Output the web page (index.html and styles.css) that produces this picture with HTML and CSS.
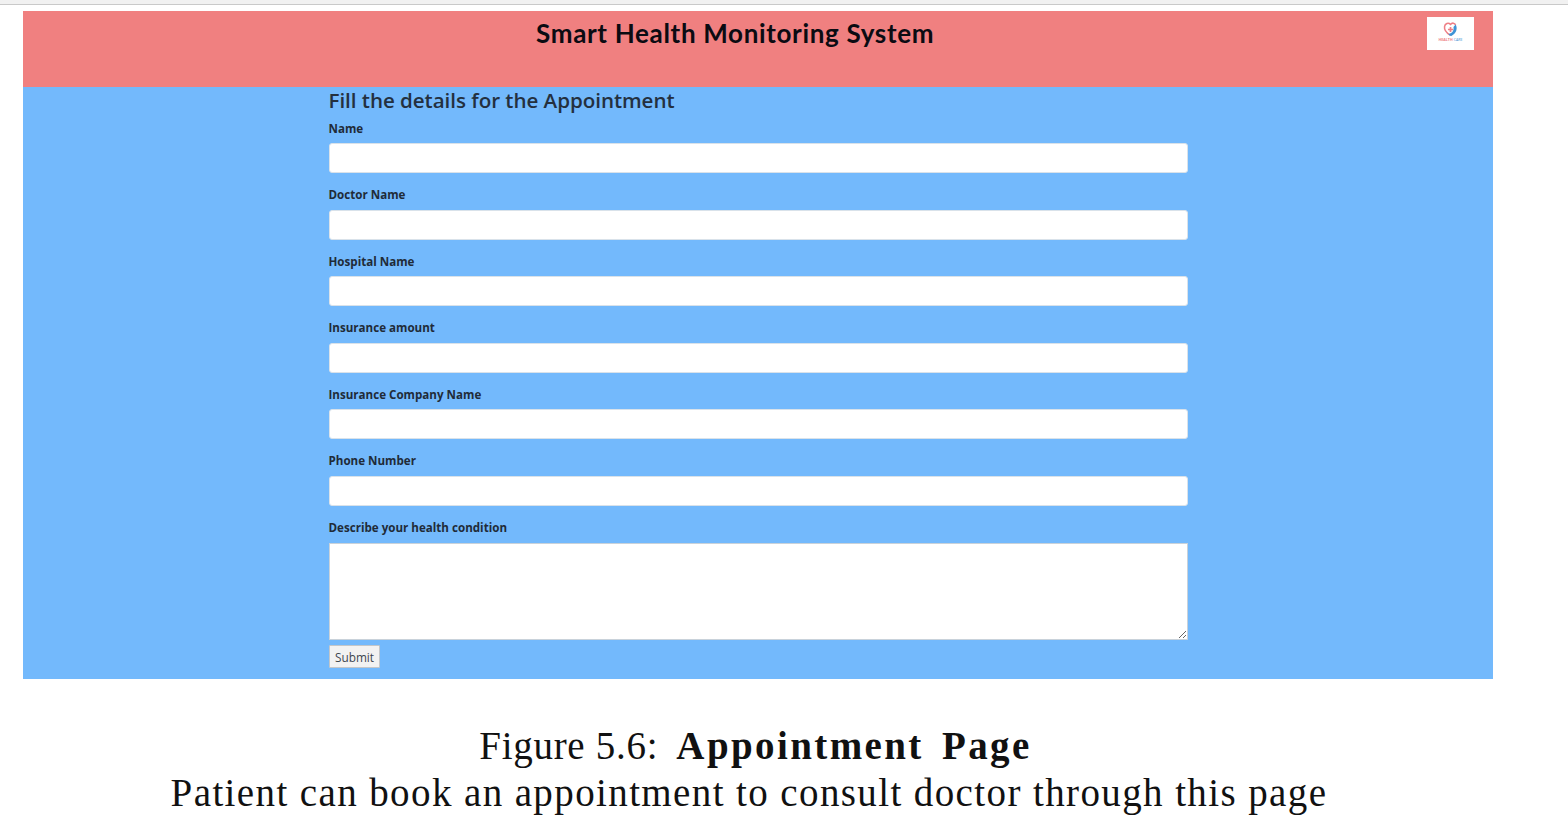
FILE: index.html
```html
<!DOCTYPE html>
<html lang="en">
<head>
    <meta charset="UTF-8">
    <title>Appointment Page</title>
    <link rel="stylesheet" href="styles.css">
</head>
<body>
    <div class="viewer-bar"></div>

    <div class="shot">
        <header class="site-header">
            <h1 class="site-title">Smart Health Monitoring System</h1>
            <div class="logo">
                <svg class="logo-icon" viewBox="0 0 20 20" width="17" height="17">
                    <path d="M10 17 C4 13 2.500 9.500 3 6.500 C3.500 3 7.500 1.500 10 4 C12 1.500 15 2.500 16 4.500" fill="none" stroke="#ee7f86" stroke-width="1.800"/>
                    <path d="M16 4 C18.500 8 17.500 14 11 17.500 C9.500 17.800 8 16.500 7.500 15 C11 15 14.500 12 13.500 7 Z" fill="#3f93d6"/>
                    <path d="M9 7 h2 v2 h2 v2 h-2 v2 h-2 v-2 h-2 v-2 h2 z" fill="#ee7f86"/>
                </svg>
                <span class="logo-text"><b>HEALTH</b> CARE</span>
            </div>
        </header>

        <main class="content">
            <form class="form-box">
                <h2 class="form-title">Fill the details for the Appointment</h2>

                <div class="field">
                    <label>Name</label>
                    <input type="text">
                </div>
                <div class="field">
                    <label>Doctor Name</label>
                    <input type="text">
                </div>
                <div class="field">
                    <label>Hospital Name</label>
                    <input type="text">
                </div>
                <div class="field">
                    <label>Insurance amount</label>
                    <input type="text">
                </div>
                <div class="field">
                    <label>Insurance Company Name</label>
                    <input type="text">
                </div>
                <div class="field">
                    <label>Phone Number</label>
                    <input type="text">
                </div>
                <div class="field field-last">
                    <label>Describe your health condition</label>
                    <textarea></textarea>
                </div>

                <button type="button" class="submit-btn">Submit</button>
            </form>
        </main>
    </div>

    <div class="caption">
        <p class="caption-line caption-head"><span class="caption-num">Figure 5.6:</span> <b>Appointment Page</b></p>
        <p class="caption-line">Patient can book an appointment to consult doctor through this page</p>
    </div>
</body>
</html>
```

FILE: styles.css
```css
body {
    margin: 0;
    background-color: #ffffff;
    font-family: "Open Sans", "Noto Sans", sans-serif;
    overflow: hidden;
}

.viewer-bar {
    height: 4px;
    background-color: #f1f1f1;
    border-bottom: 1px solid #c9c9c9;
}

.shot {
    width: 1470px;
    margin: 6px 0 0 23px;
}

.site-header {
    display: flex;
    justify-content: space-between;
    align-items: flex-start;
    height: 76px;
    background-color: #f08080;
    padding: 6px 19px 0 0;
    box-sizing: border-box;
}

.site-title {
    margin: -1px 0 0 513px;
    font-family: "Lato", sans-serif;
    font-size: 26px;
    line-height: 34px;
    font-weight: 700;
    color: #0b0b12;
    letter-spacing: 0.67px;
    white-space: nowrap;
}

.logo {
    width: 47px;
    height: 33px;
    background-color: #ffffff;
    display: flex;
    flex-direction: column;
    align-items: center;
    padding-top: 4px;
    box-sizing: border-box;
}

.logo-text {
    font-size: 3.600px;
    line-height: 4px;
    color: #3f93d6;
    white-space: nowrap;
}

.logo-text b {
    color: #ee7f86;
}

.content {
    height: 592px;
    background-color: #73b9fc;
    box-sizing: border-box;
    padding-left: 306px;
}

.form-box {
    width: 859px;
}

.form-title {
    margin: 0 0 1px -0.500px;
    font-size: 20.600px;
    line-height: 26px;
    font-weight: 600;
    color: #24303f;
    letter-spacing: -0.050px;
    white-space: nowrap;
}

.field {
    height: 66.500px;
}

.field-last {
    height: auto;
}

.field label {
    display: block;
    height: 29px;
    padding-top: 7.500px;
    margin-left: -0.500px;
    box-sizing: border-box;
    font-size: 11.600px;
    line-height: 14px;
    font-weight: 700;
    color: #212b38;
}

.field-last label {
    height: 30px;
}

.field input,
.field textarea {
    display: block;
    width: 100%;
    box-sizing: border-box;
    margin: 0;
    background-color: #ffffff;
    border: 1px solid #d9e2ea;
    border-radius: 3px;
}

.field input {
    height: 30px;
}

.field textarea {
    height: 97px;
    border-radius: 0;
    border-color: #c9d2da;
    resize: vertical;
}

.submit-btn {
    display: block;
    width: 51px;
    height: 23px;
    margin-top: 5px;
    padding: 0;
    background-color: #f2f2f2;
    border: 1px solid #c3c6c9;
    border-radius: 1px;
    font-family: "Open Sans", sans-serif;
    font-size: 11.800px;
    color: #3d4650;
}

.caption {
    width: 1498px;
    margin-top: 43px;
    text-align: center;
    font-family: "Liberation Serif", serif;
    color: #111111;
}

.caption-line {
    margin: 0;
    font-size: 39px;
    line-height: 47px;
    white-space: nowrap;
    letter-spacing: 1.390px;
}

.caption-head {
    padding-left: 13px;
    word-spacing: 7px;
}

.caption-num {
    letter-spacing: 0.700px;
    word-spacing: 0;
}

.caption-head b {
    letter-spacing: 2.400px;
    word-spacing: 6px;
}
```
